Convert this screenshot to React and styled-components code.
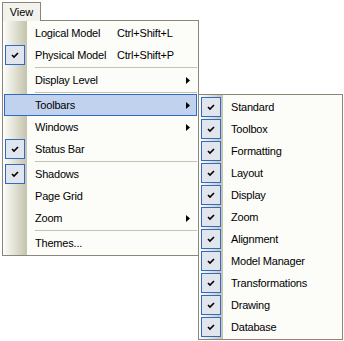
import React from 'react';
import styled, { createGlobalStyle } from 'styled-components';

const COLORS = {
  border: '#8a8678',
  menuBg: '#fcfcf9',
  tab: '#f3f2ec',
  gutterFrom: '#fefefb',
  gutterTo: '#c4c3ac',
  separator: '#c5c2b2',
  highlight: '#c1d2ee',
  highlightBorder: '#316ac5',
  checkBg: '#e1e6ee',
  text: '#000000'
};

const GlobalStyle = createGlobalStyle`
  html, body, #root {
    overflow: visible;
  }
  body {
    margin: 0;
    background: #ffffff;
    font-family: "Liberation Sans", Tahoma, Arial, sans-serif;
    font-size: 11px;
    color: ${COLORS.text};
  }
`;

const Page = styled.div`
  box-sizing: border-box;
  min-height: 341px;
  padding: 2px 0 0 2px;
  display: flex;
  flex-direction: column;
  align-items: flex-start;
`;

const Tab = styled.div`
  position: relative;
  z-index: 1;
  box-sizing: border-box;
  width: 39px;
  height: 19px;
  margin-bottom: -1px;
  padding-bottom: 1px;
  border: 1px solid ${COLORS.border};
  border-bottom: none;
  background: ${COLORS.tab};
  display: flex;
  align-items: center;
  justify-content: center;
`;

const Menu = styled.div`
  box-sizing: border-box;
  width: ${p => p.$width}px;
  padding: 1px;
  border: 1px solid ${COLORS.border};
  background: linear-gradient(
    to right,
    ${COLORS.gutterFrom} 0,
    ${COLORS.gutterTo} 24px,
    ${COLORS.menuBg} 24px
  );
`;

const SubMenu = styled(Menu)`
  position: absolute;
  top: 0;
  left: calc(100% + 1px);
  z-index: 2;
`;

const Item = styled.div`
  position: relative;
  display: flex;
  align-items: center;
  height: 22px;
  white-space: nowrap;
  letter-spacing: -0.2px;
  background: ${p => (p.$active ? COLORS.highlight : 'transparent')};
  box-shadow: ${p =>
    p.$active ? `inset 0 0 0 1px ${COLORS.highlightBorder}` : 'none'};
`;

const CheckSlot = styled.span`
  box-sizing: border-box;
  flex: none;
  width: 20px;
  height: 20px;
  margin: 0 10px 0 1px;
  display: flex;
  align-items: center;
  justify-content: center;
  border: 1px solid
    ${p => (p.$checked ? COLORS.highlightBorder : 'transparent')};
  background: ${p => (p.$checked ? COLORS.checkBg : 'transparent')};
`;

const Label = styled.span`
  min-width: 82px;
`;

const Shortcut = styled.span``;

const Arrow = styled.svg`
  margin-left: auto;
  margin-right: 7px;
`;

const Separator = styled.div`
  height: 3px;
  margin-left: 31px;
  display: flex;
  align-items: center;

  &::after {
    content: '';
    flex: 1;
    height: 1px;
    background: ${COLORS.separator};
  }
`;

const Check = () => (
  <svg width="8" height="7" viewBox="0 0 8 7">
    <polyline
      points="1,3 3,5 7,1"
      fill="none"
      stroke="#000"
      strokeWidth="1.6"
    />
  </svg>
);

const SubArrow = () => (
  <Arrow width="4" height="7" viewBox="0 0 4 7">
    <polygon points="0,0 4,3.5 0,7" fill="#000" />
  </Arrow>
);

const toolbars = [
  'Standard',
  'Toolbox',
  'Formatting',
  'Layout',
  'Display',
  'Zoom',
  'Alignment',
  'Model Manager',
  'Transformations',
  'Drawing',
  'Database'
];

const viewMenu = [
  { label: 'Logical Model', shortcut: 'Ctrl+Shift+L' },
  { label: 'Physical Model', shortcut: 'Ctrl+Shift+P', checked: true },
  { separator: true },
  { label: 'Display Level', sub: true },
  { separator: true },
  { label: 'Toolbars', sub: true, active: true, children: toolbars },
  { label: 'Windows', sub: true },
  { label: 'Status Bar', checked: true },
  { separator: true },
  { label: 'Shadows', checked: true },
  { label: 'Page Grid' },
  { label: 'Zoom', sub: true },
  { separator: true },
  { label: 'Themes...' }
];

function MenuItem({ item }) {
  return (
    <Item $active={item.active}>
      <CheckSlot $checked={item.checked}>{item.checked && <Check />}</CheckSlot>
      <Label>{item.label}</Label>
      {item.shortcut && <Shortcut>{item.shortcut}</Shortcut>}
      {item.sub && <SubArrow />}
      {item.children && (
        <SubMenu $width={145}>
          {item.children.map(name => (
            <MenuItem key={name} item={{ label: name, checked: true }} />
          ))}
        </SubMenu>
      )}
    </Item>
  );
}

export default function App() {
  return (
    <>
      <GlobalStyle />
      <Page>
        <Tab>View</Tab>
        <Menu $width={197}>
          {viewMenu.map((item, i) =>
            item.separator ? (
              <Separator key={i} />
            ) : (
              <MenuItem key={i} item={item} />
            )
          )}
        </Menu>
      </Page>
    </>
  );
}
